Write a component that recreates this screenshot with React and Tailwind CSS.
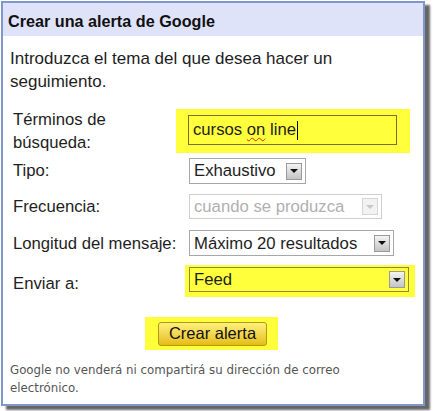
import React from 'react';

const Arrow = ({ disabled }) => (
  <span
    className={`flex h-[17px] w-[16px] items-center justify-center border ${
      disabled ? 'border-[#d6d6d6] bg-[#f2f2f2]' : 'border-[#9a9a9a] bg-gradient-to-b from-[#f4f4f4] to-[#c4c4c4]'
    }`}
  >
    <svg width="8" height="4" viewBox="0 0 8 4">
      <path d="M0 0 H8 L4 4 Z" fill={disabled ? '#c8c8c8' : '#111'} />
    </svg>
  </span>
);

const Select = ({ value, width, height, disabled, highlight }) => (
  <div
    className={`flex items-center justify-between border pl-[4px] pr-[3px] ${
      highlight ? 'border-[#8d8a3a] bg-[#ffff3c]' : disabled ? 'border-[#cfcfcf] bg-white' : 'border-[#a7a7a7] bg-white'
    } ${disabled ? 'text-[#b0b0b0]' : 'text-[#1e1e1e]'}`}
    style={{ width, height }}
  >
    <span className="whitespace-nowrap">{value}</span>
    <Arrow disabled={disabled} />
  </div>
);

export default function App() {
  return (
    <div className="h-[411px] w-[433px] bg-white pl-[1px] pt-[1px] font-['Liberation_Sans',Arial,sans-serif] text-[16.7px] text-[#1e1e1e]">
      <div className="h-[405px] w-[424px] border-2 border-[#8197cc] bg-white shadow-[5px_4px_2px_rgba(0,0,0,0.6)]">
        <div className="flex h-[33px] items-center bg-[#dfe3fa] pl-[5px] pt-[3px] text-[16.2px] font-bold text-[#111]">
          Crear una alerta de Google
        </div>

        <p className="mt-[11px] pl-[7px] text-[17px] leading-[23px]">
          Introduzca el tema del que desea hacer un
          <br />
          seguimiento.
        </p>

        <div className="mt-[15px] flex h-[45px] items-start pl-[10px]">
          <div className="w-[175px] leading-[23px]">
            Términos de
            <br />
            búsqueda:
          </div>
          <div className="-ml-[12px] mt-[1px] h-[44px] w-[234px] bg-[#ffff3c] pl-[12px] pt-[6px]">
            <div className="flex h-[30px] w-[209px] items-center border border-[#77702e] bg-[#ffff3c] pl-[4px]">
              cursos&nbsp;
              <span className="underline decoration-[#e0201a] decoration-wavy decoration-1 underline-offset-2">on</span>
              &nbsp;line
              <span className="ml-[1px] inline-block h-[19px] w-[1px] bg-black" />
            </div>
          </div>
        </div>

        <div className="mt-[5px] flex items-center pl-[10px]">
          <div className="w-[176px]">Tipo:</div>
          <Select value="Exhaustivo" width={117} height={26} />
        </div>

        <div className="mt-[10px] flex items-center pl-[10px]">
          <div className="w-[176px]">Frecuencia:</div>
          <Select value="cuando se produzca" width={193} height={25} disabled />
        </div>

        <div className="mt-[11px] flex items-center pl-[10px]">
          <div className="w-[176px]">Longitud del mensaje:</div>
          <Select value="Máximo 20 resultados" width={205} height={26} />
        </div>

        <div className="mt-[9px] flex items-start pl-[10px]">
          <div className="w-[172px] pt-[6px]">Enviar a:</div>
          <div className="h-[32px] w-[230px] bg-[#ffff3c] pl-[4px] pt-[2px]">
            <Select value="Feed" width={220} height={25} highlight />
          </div>
        </div>

        <div className="mt-[20px] flex h-[33px] w-[133px] items-center bg-[#ffff3c] pl-[13px] ml-[142px]">
          <button className="h-[24px] w-[109px] rounded-[3px] border border-[#b39a12] bg-gradient-to-b from-[#fff07a] to-[#e6bd00] text-[16.5px] leading-none text-[#111]">
            Crear alerta
          </button>
        </div>

        <p className="mt-[11px] pl-[7px] font-['DejaVu_Sans',Verdana,sans-serif] text-[11.8px] leading-[18px] text-[#555]">
          Google no venderá ni compartirá su dirección de correo
          <br />
          electrónico.
        </p>
      </div>
    </div>
  );
}
